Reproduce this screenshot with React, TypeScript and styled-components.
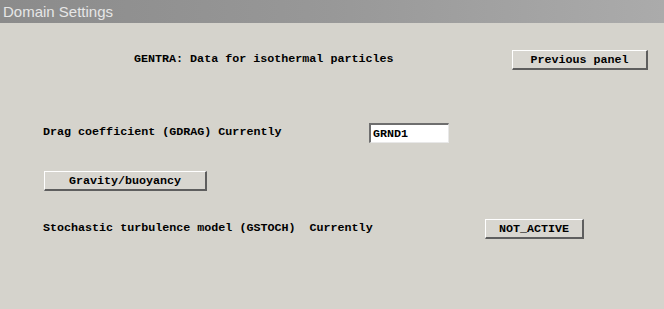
import React from 'react'
import styled, { createGlobalStyle } from 'styled-components'

const GlobalStyle = createGlobalStyle`
  html, body {
    margin: 0;
    padding: 0;
    background: #d5d3cc;
  }
`

const Window = styled.div`
  width: 664px;
  height: 309px;
  background-color: #d5d3cc;
  display: flex;
  flex-direction: column;
  overflow: hidden;
`

const TitleBar = styled.div`
  height: 23px;
  display: flex;
  align-items: center;
  padding-left: 3px;
  background: linear-gradient(to right, #8b8b8b 0%, #989898 50%, #ababab 100%);
  color: #e6e6e6;
  font-family: 'Liberation Sans', Arial, sans-serif;
  font-size: 15px;
`

interface RowProps {
  top: number
}

const Row = styled.div<RowProps>`
  height: 20px;
  margin-top: ${props => props.top}px;
  display: flex;
  align-items: center;
`

interface LabelProps {
  left: number
  width?: number
}

const Label = styled.div<LabelProps>`
  margin-left: ${props => props.left}px;
  margin-top: -3px;
  width: ${props => (props.width ? props.width + 'px' : 'auto')};
  font-family: 'Liberation Mono', 'Courier New', monospace;
  font-weight: bold;
  font-size: 11.7px;
  color: #000;
  white-space: pre;
`

interface ButtonProps {
  left: number
  width: number
}

const Button = styled.div<ButtonProps>`
  box-sizing: border-box;
  margin-left: ${props => props.left}px;
  width: ${props => props.width}px;
  height: 20px;
  display: flex;
  align-items: center;
  justify-content: center;
  background: #d8d6d0;
  border-top: 1px solid #ffffff;
  border-left: 1px solid #ffffff;
  border-right: 2px solid #5e5e5e;
  border-bottom: 2px solid #5e5e5e;
  font-family: 'Liberation Mono', 'Courier New', monospace;
  font-weight: bold;
  font-size: 11.7px;
  color: #000;
  white-space: pre;
`

const Field = styled.div<ButtonProps>`
  box-sizing: border-box;
  margin-left: ${props => props.left}px;
  width: ${props => props.width}px;
  height: 20px;
  display: flex;
  align-items: center;
  padding-left: 2px;
  background: #ffffff;
  border-top: 2px solid #6e6e6e;
  border-left: 2px solid #6e6e6e;
  border-right: 1px solid #e8e8e8;
  border-bottom: 1px solid #e8e8e8;
  font-family: 'Liberation Mono', 'Courier New', monospace;
  font-weight: bold;
  font-size: 11.7px;
  color: #000;
`

export default function App() {
  return (
    <Window>
      <GlobalStyle />
      <TitleBar>Domain Settings</TitleBar>
      <Row top={27}>
        <Label left={134} width={378}>GENTRA: Data for isothermal particles</Label>
        <Button left={0} width={136}>Previous panel</Button>
      </Row>
      <Row top={53}>
        <Label left={43} width={326}>Drag coefficient (GDRAG) Currently</Label>
        <Field left={0} width={80}>GRND1</Field>
      </Row>
      <Row top={28}>
        <Button left={44} width={163}>Gravity/buoyancy</Button>
      </Row>
      <Row top={28}>
        <Label left={43} width={442}>Stochastic turbulence model (GSTOCH)  Currently</Label>
        <Button left={0} width={99}>NOT_ACTIVE</Button>
      </Row>
    </Window>
  )
}
